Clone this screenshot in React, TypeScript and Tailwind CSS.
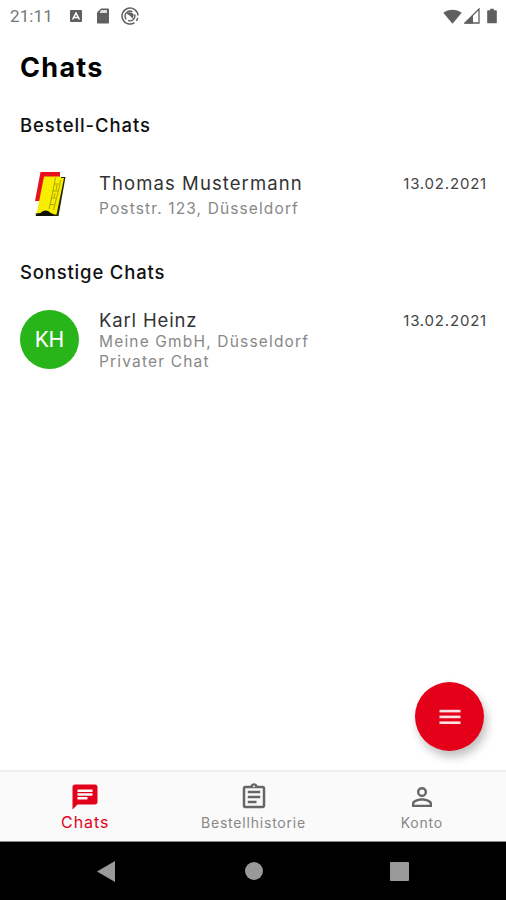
import type { ReactNode } from 'react';
import { MdChat, MdOutlineAssignment, MdPersonOutline } from 'react-icons/md';

function StatusBar() {
  return (
    <header className="flex h-8 items-center justify-between pr-[9px] pl-[10px] text-[#5f5f5f]">
      <div className="flex items-center">
        <span className="w-[59px] font-[Roboto] text-[17px] leading-8 tracking-[0.1px] text-[#777]">21:11</span>
        <svg width="14" height="14" viewBox="0 0 14 14">
          <rect x="1" y="1" width="12" height="12" rx="1" fill="currentColor" />
          <path d="M3.5 10.5L7 4l3.5 6.5M5 8.5h4" fill="none" stroke="#fff" strokeWidth="1.5" />
        </svg>
        <svg width="14" height="16" viewBox="0 0 14 16" className="ml-[13px]">
          <path d="M5 0.5h7a1 1 0 0 1 1 1v13a1 1 0 0 1-1 1H2a1 1 0 0 1-1-1V4.5z" fill="currentColor" />
          <path d="M5 2h6v3H3.5z" fill="#ddd" />
        </svg>
        <svg width="18" height="18" viewBox="0 0 18 18" fill="none" stroke="currentColor" className="ml-[11px]">
          <path d="M13.5 15.7A8 8 0 1 1 17 8.5M16.8 11l-1.3 3" strokeWidth="1.5" />
          <path d="M5.2 12.2A5 5 0 0 1 11.5 4.7M13.7 7.5a5 5 0 0 1-6.5 6" strokeWidth="1.4" />
          <path d="M5.5 6.5c2-2 5.5-1.5 7.3 1.2L11.5 11.8 9.3 9z" fill="currentColor" stroke="none" />
        </svg>
      </div>
      <div className="flex items-center">
        <svg width="19" height="15" viewBox="0 0 19 15">
          <path d="M0.3 3.8C5.6-0.4 13.4-0.4 18.7 3.8L9.5 14.8z" fill="currentColor" />
        </svg>
        <svg width="16" height="16" viewBox="0 0 16 16" className="ml-[2px]">
          <path d="M15 1v14H1z" fill="none" stroke="currentColor" strokeWidth="1.3" />
          <path d="M9 7v8.5H0.5z" fill="currentColor" />
        </svg>
        <svg width="10" height="16" viewBox="0 0 11 16" className="ml-[7px]">
          <path d="M3.5 0h4v1.6H10a.8.8 0 0 1 .8.8v12.8a.8.8 0 0 1-.8.8H1a.8.8 0 0 1-.8-.8V2.4A.8.8 0 0 1 1 1.6h2.5z" fill="currentColor" />
        </svg>
      </div>
    </header>
  );
}

function BookLogo() {
  return (
    <svg width="59" height="60" viewBox="0 0 59 60">
      <path d="M20.5 8H40v5H24.5L20.5 37H15z" fill="#e8101c" />
      <path d="M41 13h4.5L38.5 52H15.8v-2.5L34 47z" fill="#26260c" />
      <path d="M24 12.5h16.5l-.3 1.5H44L36.5 50.5H16.5z" fill="#f7ee00" />
      <path
        d="M35.5 13.5L32 32l-3 13M40.5 16l-1 6-6 24M34.5 20h4M33 27h5M31.5 34h4.5M30 40.5h4M37 21l-.8 5M35 29l-.8 4"
        fill="none"
        stroke="#8d8700"
        strokeWidth="0.7"
      />
      <path d="M16 52l.5-2.5 4-.5c2.5-3.5 8-3.5 10 0l3 1 .5 2z" fill="#11110a" />
    </svg>
  );
}

function ChatRow({ avatar, name, date, children }: { avatar: ReactNode; name: ReactNode; date: string; children: ReactNode }) {
  return (
    <div className="flex">
      <div className="w-[79px] shrink-0">{avatar}</div>
      <div className="flex-1">
        <div className="flex justify-between">
          <h3 className="text-[18.5px] leading-6 text-[#333]">{name}</h3>
          <time className="-mr-[1px] text-[15px] leading-[26px] tracking-[0.8px] text-[#444]">{date}</time>
        </div>
        {children}
      </div>
    </div>
  );
}

export default function App() {
  return (
    <div className="flex h-[900px] w-[506px] flex-col overflow-hidden bg-white font-[Inter,sans-serif]">
      <StatusBar />

      <main className="relative flex-1 px-5">
        <h1 className="pt-[18px] text-[27px] leading-9 font-bold tracking-[1.3px] text-black">Chats</h1>

        <h2 className="mt-[27px] text-[18.5px] leading-6 font-medium tracking-[0.9px] text-[#111]">Bestell-Chats</h2>
        <div className="mt-[34px] h-[47px]">
          <ChatRow
            avatar={<div className="-mt-[7px]"><BookLogo /></div>}
            name={<span className="tracking-[1.08px]">Thomas Mustermann</span>}
            date="13.02.2021"
          >
            <p className="mt-[2px] text-[15.5px] leading-5 tracking-[1.12px] text-[#888]">Poststr. 123, Düsseldorf</p>
          </ChatRow>
        </div>

        <h2 className="mt-[42px] text-[18.5px] leading-6 font-medium tracking-[0.82px] text-[#111]">Sonstige Chats</h2>
        <div className="mt-[24px]">
          <ChatRow
            avatar={
              <div className="mt-[2px] flex size-[59px] items-center justify-center rounded-full bg-[#27b51a] font-[Roboto] text-[22px] text-white">
                KH
              </div>
            }
            name={<span className="tracking-[0.85px]">Karl Heinz</span>}
            date="13.02.2021"
          >
            <p className="-mt-[2px] text-[15.5px] leading-5 tracking-[1.17px] text-[#888]">
              Meine GmbH, Düsseldorf
              <br />
              Privater Chat
            </p>
          </ChatRow>
        </div>

        <button className="absolute right-[22px] bottom-[19px] flex size-[69px] items-center justify-center rounded-full bg-[#e5001a] pl-px shadow-[3px_6px_10px_rgba(0,0,0,0.25)]">
          <svg width="22" height="16" viewBox="0 0 22 16" fill="#ffe1e3">
            <rect x="0.5" y="0.8" width="21" height="2.6" />
            <rect x="0.5" y="6.6" width="21" height="2.6" />
            <rect x="0.5" y="12.4" width="21" height="2.6" />
          </svg>
        </button>
      </main>

      <nav className="grid h-[72px] grid-cols-3 border-t-2 border-b border-t-[#f0f0f0] border-b-[#888] bg-[#fafafa] pl-px">
        <div className="flex flex-col items-center pt-[10px] text-[#e2001a]">
          <MdChat size={30} />
          <span className="text-[16px] leading-5 tracking-[0.9px]">Chats</span>
        </div>
        <div className="flex flex-col items-center pt-[10px] text-[#666]">
          <MdOutlineAssignment size={30} className="ml-px" />
          <span className="text-[14px] leading-[22px] tracking-[0.8px] text-[#888]">Bestellhistorie</span>
        </div>
        <div className="flex flex-col items-center pt-[10px] text-[#666]">
          <MdPersonOutline size={30} />
          <span className="text-[14px] leading-[22px] tracking-[0.8px] text-[#888]">Konto</span>
        </div>
      </nav>

      <footer className="flex h-[58px] items-center justify-between bg-black px-[97px] text-[#999]">
        <svg width="18" height="21" viewBox="0 0 18 21">
          <path d="M18 0v21L0 10.5z" fill="currentColor" />
        </svg>
        <span className="ml-[2px] size-[18px] rounded-full bg-[#999]" />
        <span className="size-[19px] rounded-[1px] bg-[#999]" />
      </footer>
    </div>
  );
}
